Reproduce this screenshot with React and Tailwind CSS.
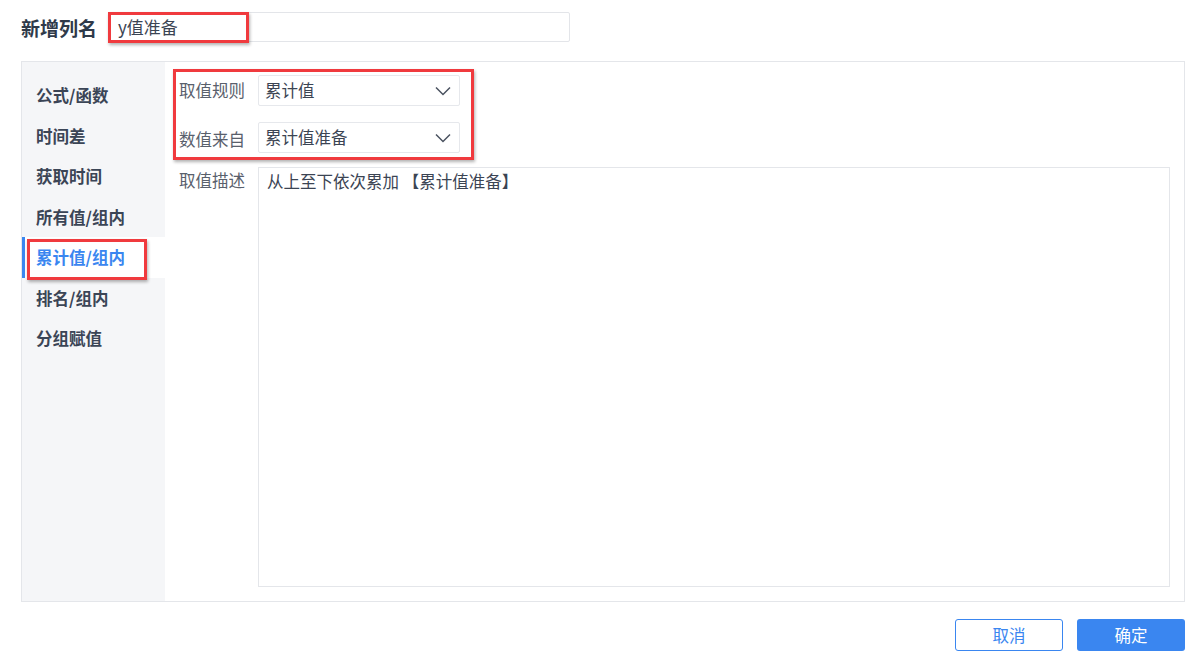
import React from 'react';

const menu = ['公式/函数', '时间差', '获取时间', '所有值/组内', '累计值/组内', '排名/组内', '分组赋值'];

function Chevron() {
  return (
    <svg width="16" height="10" viewBox="0 0 16 10" className="shrink-0">
      <polyline points="1,1.5 8,8.5 15,1.5" fill="none" stroke="#4a5260" strokeWidth="1.5" />
    </svg>
  );
}

function SelectBox({ value }) {
  return (
    <div className="w-[202px] h-[31px] border border-[#e6e8ec] rounded-[2px] bg-white flex items-center justify-between pl-[6px] pr-[8px] text-[16.5px] text-[#3b4453]">
      <span>{value}</span>
      <Chevron />
    </div>
  );
}

export default function App() {
  const active = 4;
  return (
    <div
      className="relative w-[1200px] h-[665px] bg-white overflow-hidden"
      style={{ fontFamily: '"Noto Sans CJK SC", "Noto Sans", sans-serif' }}
    >
      {/* 列名 */}
      <div className="flex items-center pt-[12px] pl-[21px] h-[42px]">
        <span className="w-[87px] text-[19px] font-bold text-[#2f3a4a] leading-none">新增列名</span>
        <div className="w-[462px] h-[30px] border border-[#e3e5e9] rounded-[2px] flex items-center pl-[9px] text-[17px] text-[#3b4453]">
          y值准备
        </div>
      </div>

      {/* 主面板 */}
      <div className="mt-[19px] ml-[21px] w-[1164px] h-[541px] border border-[#e4e6ea] flex">
        <div className="w-[143px] bg-[#f5f6f8] pt-[13px]">
          {menu.map((m, i) => (
            <div
              key={m}
              className={`h-[40.6px] flex items-center pl-[11px] text-[16.5px] font-bold border-l-[3px] ${
                i === active ? 'bg-white text-[#3a86f0] border-[#3a86f0]' : 'text-[#3b4556] border-transparent'
              }`}
            >
              {m}
            </div>
          ))}
        </div>

        <div className="flex-1 flex flex-col pt-[13px] pl-[14px] pr-[14px] pb-[14px] gap-[16px]">
          <div className="flex items-center">
            <span className="w-[79px] text-[16.5px] text-[#59606c]">取值规则</span>
            <SelectBox value="累计值" />
          </div>
          <div className="flex items-center">
            <span className="w-[79px] text-[16.5px] text-[#59606c] pt-[3px]">数值来自</span>
            <SelectBox value="累计值准备" />
          </div>
          <div className="flex flex-1 -mt-[2px]">
            <span className="w-[79px] text-[16.5px] text-[#59606c] pt-[1px]">取值描述</span>
            <div className="flex-1 border border-[#e4e6ea] pl-[8px] pt-[1px] text-[16.5px] text-[#3b4453]">
              从上至下依次累加 【累计值准备】
            </div>
          </div>
        </div>
      </div>

      {/* 按钮 */}
      <div className="flex justify-end gap-[14px] mt-[17px] pr-[15px]">
        <button className="w-[108px] h-[32px] border border-[#3a86f0] rounded-[3px] bg-white text-[16.5px] text-[#3a86f0]">
          取消
        </button>
        <button className="w-[108px] h-[32px] rounded-[3px] bg-[#3a86f0] text-[16.5px] text-white">
          确定
        </button>
      </div>

      {/* 标注框 */}
      <div className="absolute left-[108px] top-[12px] w-[141px] h-[31px] border-[3px] border-[#f03a3e] shadow-[1px_2px_3px_rgba(0,0,0,0.3)] pointer-events-none" />
      <div className="absolute left-[173px] top-[69px] w-[301px] h-[91px] border-[3px] border-[#f03a3e] shadow-[1px_2px_3px_rgba(0,0,0,0.3)] pointer-events-none" />
      <div className="absolute left-[27px] top-[239px] w-[120px] h-[41px] border-[3px] border-[#f03a3e] shadow-[1px_2px_3px_rgba(0,0,0,0.3)] pointer-events-none" />
    </div>
  );
}
